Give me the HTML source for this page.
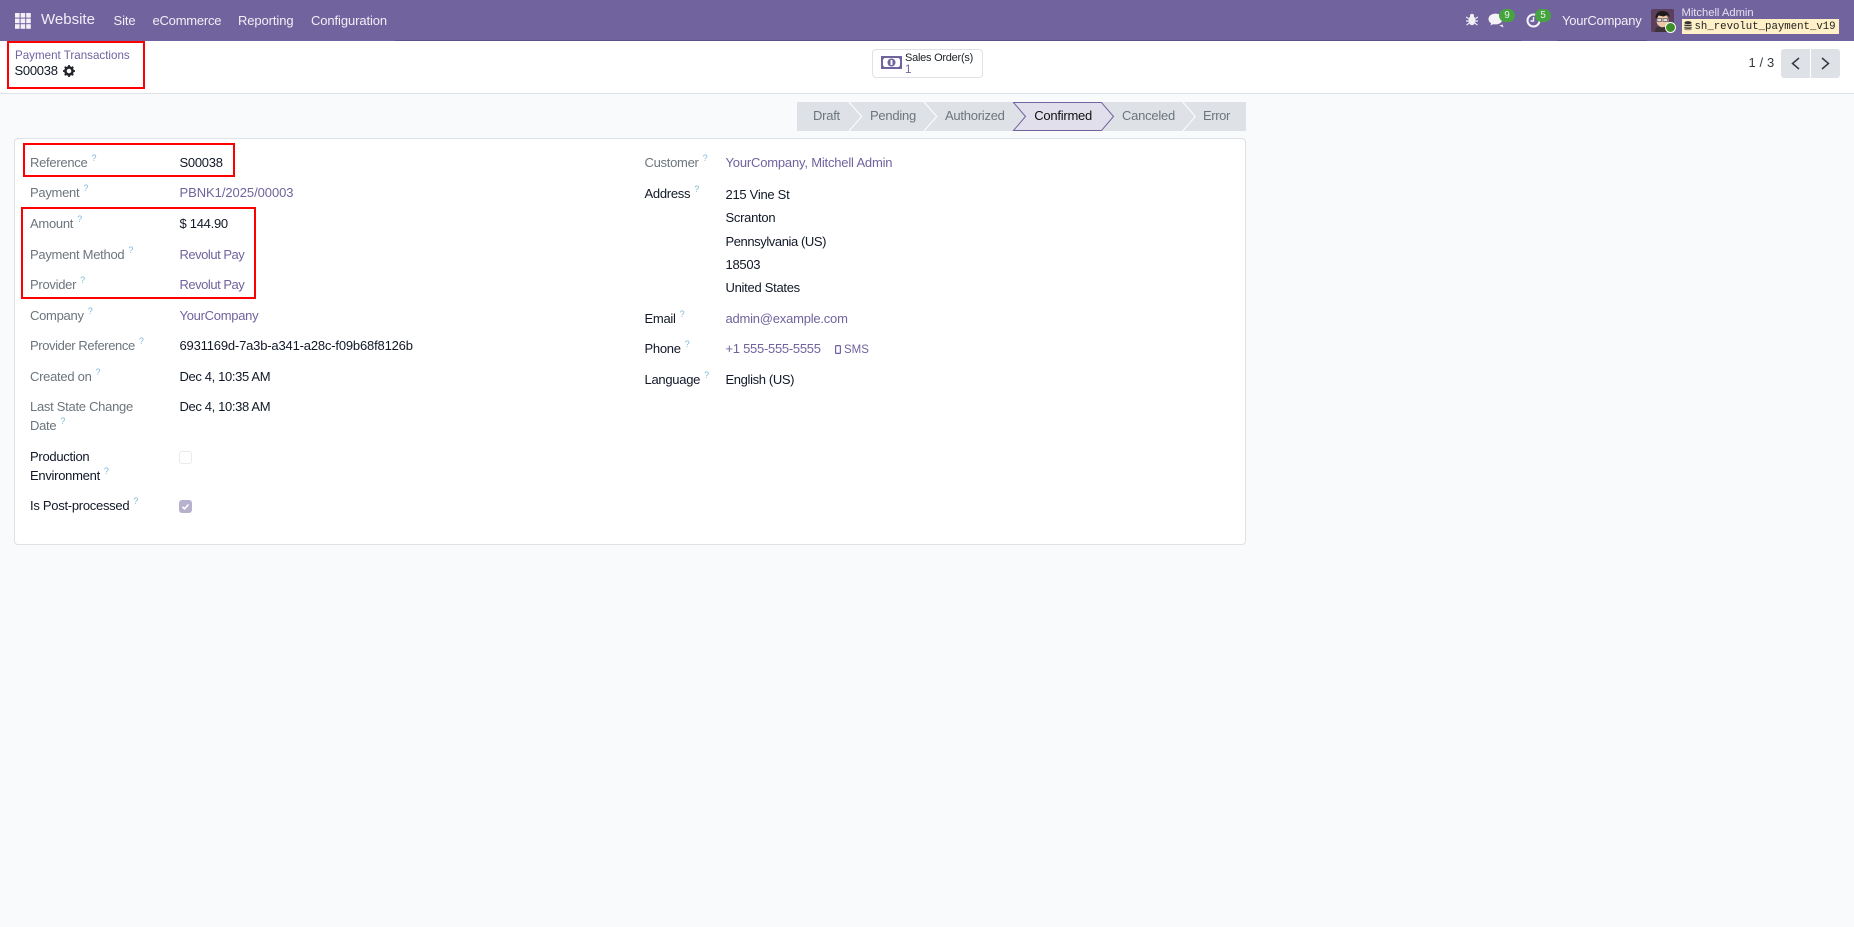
<!DOCTYPE html>
<html><head><meta charset="utf-8"><title>S00038</title>
<style>
html,body{margin:0;padding:0;width:1854px;height:927px;overflow:hidden;background:#f9fafb;}
body{position:relative;font-family:"Liberation Sans",sans-serif;font-size:13px;color:#212529;}
.a{position:absolute;}
.t{position:absolute;white-space:nowrap;line-height:16px;letter-spacing:-.28px;}
.n{color:#f1eff6;letter-spacing:-.1px;font-size:13px;}
.l{color:#6c757d;}
.d{color:#111827;}
.k{color:#71639e;}
.t sup{font-size:9px;color:#7fb8d8;margin-left:4px;line-height:0;vertical-align:baseline;position:relative;top:-6px;letter-spacing:0;}
.s{color:#6c757d;top:108px;letter-spacing:-.25px;}
.r{position:absolute;border:2px solid #f00;box-sizing:border-box;}
.b{position:absolute;background:#45a340;color:#e8f5e6;border-radius:7px;height:13px;width:16px;line-height:13px;font-size:10px;text-align:center;}
</style></head><body>
<div class="a" style="left:0;top:0;width:1854px;height:41px;background:#71639e"></div>
<div class="a" style="left:395px;top:40px;width:1126px;height:1px;background:#5c5088"></div>
<div class="a" style="left:1557px;top:40px;width:90px;height:1px;background:#5c5088"></div>
<div class="a" style="left:0;top:41px;width:1854px;height:52px;background:#fff"></div>
<div class="a" style="left:0;top:93px;width:1854px;height:1px;background:#dee2e6"></div>

<svg class="a" style="left:15px;top:13px" width="16" height="16" viewBox="0 0 16 16" fill="#f3f1f7"><rect x="0" y="0" width="4.6" height="4.6"/><rect x="5.6" y="0" width="4.6" height="4.6"/><rect x="11.2" y="0" width="4.6" height="4.6"/><rect x="0" y="5.6" width="4.6" height="4.6"/><rect x="5.6" y="5.6" width="4.6" height="4.6"/><rect x="11.2" y="5.6" width="4.6" height="4.6"/><rect x="0" y="11.2" width="4.6" height="4.6"/><rect x="5.6" y="11.2" width="4.6" height="4.6"/><rect x="11.2" y="11.2" width="4.6" height="4.6"/></svg>
<div class="t n" style="left:41px;top:12px;font-size:15px;letter-spacing:0">Website</div>
<div class="t n" style="left:113.5px;top:13px">Site</div>
<div class="t n" style="left:152.5px;top:13px;letter-spacing:-.22px">eCommerce</div>
<div class="t n" style="left:238px;top:13px">Reporting</div>
<div class="t n" style="left:311px;top:13px">Configuration</div>

<svg class="a" style="left:1466px;top:13px" width="12" height="13" viewBox="0 0 12 13" fill="#f1eff6"><ellipse cx="6" cy="7.5" rx="3.6" ry="4.6"/><circle cx="6" cy="2.8" r="2.1"/><path d="M0 4l2.6 1.6M12 4L9.4 5.6M0 8h2.4M12 8H9.6M.6 12l2.4-1.8M11.4 12L9 10.2" stroke="#f1eff6" stroke-width="1.2" fill="none"/></svg>
<svg class="a" style="left:1488px;top:13px" width="18" height="15" viewBox="0 0 17 15" fill="#f5f3f8"><ellipse cx="7" cy="6" rx="7" ry="5.4"/><path d="M3 9l-1 3.5L7 10z"/><path d="M11 12.5l4 2-1-3z"/></svg>
<div class="b" style="left:1499px;top:9px">9</div>
<svg class="a" style="left:1526px;top:13px" width="15" height="15" viewBox="0 0 15 15" fill="none" stroke="#f5f3f8"><circle cx="7.5" cy="7.5" r="6" stroke-width="2"/><path d="M7.5 4v4H4.5" stroke-width="1.4"/></svg>
<div class="b" style="left:1535px;top:9px">5</div>
<div class="t n" style="left:1562px;top:13px;font-size:13px;letter-spacing:-.22px">YourCompany</div>

<svg class="a" style="left:1651px;top:9px" width="23" height="23" viewBox="0 0 23 23"><rect width="23" height="23" rx="2" fill="#5c3f5c"/><path d="M4 23c0-5 3-6 7.500-6s7.500 1 7.500 6z" fill="#3c3338"/><ellipse cx="11.500" cy="11.500" rx="6" ry="6.800" fill="#eec6a8"/><path d="M4.500 9c0-5 3-7 7-7s7 2 7 6l-2-2-4 1.500-5-1-1.500 3z" fill="#1e1a1c"/><rect x="6" y="9.500" width="4.500" height="3" fill="#ddd" stroke="#444" stroke-width=".6"/><rect x="12" y="9.500" width="4.500" height="3" fill="#ddd" stroke="#444" stroke-width=".6"/></svg>
<div class="a" style="left:1664.500px;top:22px;width:9px;height:9px;border-radius:50%;background:#3d8f27;border:1.500px solid #fff"></div>
<div class="t" style="left:1681.500px;top:5px;color:#e6e2ef;font-size:11.200px;letter-spacing:0">Mitchell Admin</div>
<div class="a" style="left:1682px;top:19px;width:157px;height:15px;background:#fff0c8"></div>
<svg class="a" style="left:1684px;top:21px" width="8" height="10" viewBox="0 0 8 10" fill="#333"><ellipse cx="4" cy="1.700" rx="3.600" ry="1.600"/><path d="M.4 3.200v1.500c0 .8 7.200 .8 7.200 0V3.200c0 .9-7.200 .9-7.200 0zM.4 5.800v1.500c0 .8 7.200 .8 7.200 0V5.800c0 .9-7.200 .9-7.200 0zM.4 8v.5c0 .9 7.200 .9 7.200 0V8c0 .8-7.200 .8-7.200 0z"/></svg>
<div class="t" style="left:1694.500px;top:18.500px;font-family:'Liberation Mono',monospace;font-size:10.700px;letter-spacing:0;color:#1f1f1f">sh_revolut_payment_v19</div>

<div class="t" style="left:15px;top:48px;color:#71639e;font-size:11.600px;letter-spacing:0">Payment Transactions</div>
<div class="t d" style="left:14.500px;top:63px">S00038</div>
<svg class="a" style="left:63px;top:64.500px" width="12" height="12" viewBox="0 0 12 12"><circle cx="6" cy="6" r="3.600" fill="none" stroke="#212529" stroke-width="2.600"/><path d="M6 0v12M0 6h12M1.800 1.800l8.400 8.400M10.200 1.800l-8.400 8.400" stroke="#212529" stroke-width="1.800" stroke-dasharray="2.400 7.200"/></svg>

<div class="a" style="left:871.500px;top:49px;width:111px;height:29px;box-sizing:border-box;background:#fff;border:1px solid #dee2e6;border-radius:4px"></div>
<svg class="a" style="left:880.500px;top:55.500px" width="21" height="13" viewBox="0 0 21 13"><rect width="21" height="13" fill="#71639e"/><path d="M3.500 2h14l1.500 1.500v6L17.500 11h-14L2 9.500v-6z" fill="#fff"/><circle cx="10.500" cy="6.500" r="4" fill="#71639e"/><rect x="9.500" y="4" width="2" height="5" fill="#fff"/></svg>
<div class="t" style="left:905px;top:49.500px;font-size:11px;letter-spacing:-.25px;color:#212529">Sales Order(s)</div>
<div class="t" style="left:905px;top:61.500px;font-size:11.700px;letter-spacing:0;color:#7465a8">1</div>

<div class="t" style="left:1748.500px;top:55px;letter-spacing:.1px;color:#343a40">1 / 3</div>
<div class="a" style="left:1781px;top:49px;width:29px;height:29px;background:#dee2e6;border-radius:3px 0 0 3px"></div>
<div class="a" style="left:1811px;top:49px;width:29px;height:29px;background:#dee2e6;border-radius:0 3px 3px 0"></div>
<svg class="a" style="left:1781px;top:49px" width="59" height="29" fill="none" stroke="#343a40" stroke-width="1.500"><path d="M18 9l-6.500 5.500 6.500 5.500"/><path d="M41 9l6.500 5.500-6.500 5.500"/></svg>

<svg class="a" style="left:797px;top:102px" width="449" height="29" viewBox="797 102 449 29">
<rect x="797" y="102" width="449" height="29" fill="#dee2e6"/>
<path d="M849 102l12.700 14.500L849 131M924 102l12.700 14.500L924 131M1182.700 102l12.700 14.500-12.700 14.500" fill="none" stroke="#fff" stroke-width="1"/>
<path d="M1013.500 102.500H1101.500L1113.500 116.500 1101.500 130.500H1013.500L1025.500 116.500z" fill="#e2dfec" stroke="#71639e" stroke-width="1"/>
</svg>
<div class="t s" style="left:813px">Draft</div>
<div class="t s" style="left:870px">Pending</div>
<div class="t s" style="left:945px">Authorized</div>
<div class="t s" style="left:1034.300px;color:#111">Confirmed</div>
<div class="t s" style="left:1122px">Canceled</div>
<div class="t s" style="left:1203px;letter-spacing:-.4px">Error</div>

<div class="a" style="left:14px;top:138px;width:1232px;height:407px;box-sizing:border-box;background:#fff;border:1px solid #dee2e6;border-radius:4px"></div>

<div class="t l" style="left:30px;top:155px">Reference<sup>?</sup></div>
<div class="t d" style="left:179.500px;top:155px">S00038</div>
<div class="t l" style="left:30px;top:185px">Payment<sup>?</sup></div>
<div class="t k" style="left:179.500px;top:185px;letter-spacing:-.06px">PBNK1/2025/00003</div>
<div class="t l" style="left:30px;top:216px">Amount<sup>?</sup></div>
<div class="t d" style="left:179.500px;top:216px">$ 144.90</div>
<div class="t l" style="left:30px;top:247px">Payment Method<sup>?</sup></div>
<div class="t k" style="left:179.500px;top:247px;letter-spacing:-.48px">Revolut Pay</div>
<div class="t l" style="left:30px;top:277px">Provider<sup>?</sup></div>
<div class="t k" style="left:179.500px;top:277px;letter-spacing:-.48px">Revolut Pay</div>
<div class="t l" style="left:30px;top:308px">Company<sup>?</sup></div>
<div class="t k" style="left:179.500px;top:308px">YourCompany</div>
<div class="t l" style="left:30px;top:338px;letter-spacing:-.4px">Provider Reference<sup>?</sup></div>
<div class="t d" style="left:179.500px;top:338px;letter-spacing:-.18px">6931169d-7a3b-a341-a28c-f09b68f8126b</div>
<div class="t l" style="left:30px;top:369px">Created on<sup>?</sup></div>
<div class="t d" style="left:179.500px;top:369px;letter-spacing:-.36px">Dec 4, 10:35 AM</div>
<div class="t l" style="left:30px;top:399px">Last State Change</div>
<div class="t l" style="left:30px;top:418px">Date<sup>?</sup></div>
<div class="t d" style="left:179.500px;top:399px;letter-spacing:-.36px">Dec 4, 10:38 AM</div>
<div class="t d" style="left:30px;top:449px">Production</div>
<div class="t d" style="left:30px;top:468px">Environment<sup>?</sup></div>
<div class="a" style="left:179px;top:451px;width:13px;height:13px;box-sizing:border-box;border:1px solid #e8eaed;border-radius:3px"></div>
<div class="t d" style="left:30px;top:498px;letter-spacing:-.28px">Is Post-processed<sup>?</sup></div>
<svg class="a" style="left:179px;top:500px" width="13" height="13" viewBox="0 0 13 13"><rect width="13" height="13" rx="3" fill="#b8b1ce"/><path d="M3.500 6.800l2 2 4-4.300" fill="none" stroke="#fff" stroke-width="1.600"/></svg>

<div class="t l" style="left:644.500px;top:155px">Customer<sup>?</sup></div>
<div class="t k" style="left:725.500px;top:155px;letter-spacing:-.19px">YourCompany, Mitchell Admin</div>
<div class="t d" style="left:644.500px;top:186px">Address<sup>?</sup></div>
<div class="t d" style="left:725.500px;top:187px">215 Vine St</div>
<div class="t d" style="left:725.500px;top:210px">Scranton</div>
<div class="t d" style="left:725.500px;top:234px;letter-spacing:-.42px">Pennsylvania (US)</div>
<div class="t d" style="left:725.500px;top:257px">18503</div>
<div class="t d" style="left:725.500px;top:280px">United States</div>
<div class="t d" style="left:644.500px;top:311px">Email<sup>?</sup></div>
<div class="t k" style="left:725.500px;top:311px;letter-spacing:-.22px">admin@example.com</div>
<div class="t d" style="left:644.500px;top:341px">Phone<sup>?</sup></div>
<div class="t k" style="left:725.500px;top:341px">+1 555-555-5555</div>
<svg class="a" style="left:835px;top:345px" width="6" height="9" viewBox="0 0 6 9"><rect x=".6" y=".6" width="4.800" height="7.800" rx=".8" fill="none" stroke="#71639e" stroke-width="1.200"/></svg>
<div class="t k" style="left:844px;top:342px;font-size:11.500px;letter-spacing:0">SMS</div>
<div class="t d" style="left:644.500px;top:371.500px">Language<sup>?</sup></div>
<div class="t d" style="left:725.500px;top:371.500px;letter-spacing:-.36px">English (US)</div>

<div class="r" style="left:7px;top:41px;width:138px;height:48px"></div>
<div class="r" style="left:23px;top:143px;width:212px;height:34px"></div>
<div class="r" style="left:21px;top:207px;width:235px;height:92px"></div>
</body></html>
